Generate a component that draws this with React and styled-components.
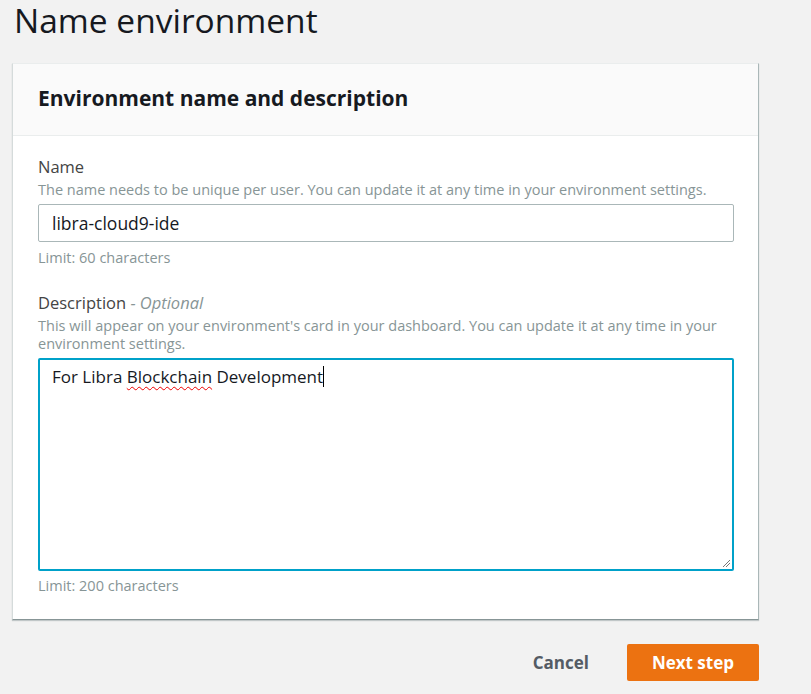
import React from "react";
import styled, { createGlobalStyle } from "styled-components";

const GlobalStyle = createGlobalStyle`
  body {
    margin: 0;
    background: #f2f2f2;
    font-family: "Open Sans", "Noto Sans", sans-serif;
    color: #16191f;
  }
`;

const Page = styled.div`
  width: 747px;
  padding: 0 0 0 12px;
`;

const Title = styled.h1`
  margin: 0 0 23px 2px;
  font-size: 33.5px;
  line-height: 40px;
  font-weight: 400;
  color: #16191f;
`;

const Card = styled.section`
  background: #fff;
  border-left: 1px solid #d5dbdb;
  border-right: 1px solid #aab7b8;
  border-bottom: 1px solid #879596;
  border-top: 1px solid #eaeded;
  box-shadow: 0 1px 1px 0 rgba(0, 28, 36, 0.2);
`;

const CardHeader = styled.header`
  background: #fafafa;
  border-bottom: 1px solid #eaeded;
  height: 72px;
  box-sizing: border-box;
  display: flex;
  align-items: center;
  padding: 0 25px 3px 25px;
`;

const CardTitle = styled.h2`
  margin: 0;
  font-size: 21px;
  font-weight: 700;
  color: #16191f;
`;

const CardBody = styled.div`
  padding: 20px 25px 24px 25px;
  display: flex;
  flex-direction: column;
  gap: 25px;
`;

const Field = styled.div`
  display: flex;
  flex-direction: column;
`;

const Label = styled.label`
  font-size: 16.5px;
  line-height: 22px;
  color: #444;
`;

const Optional = styled.i`
  color: #879596;
`;

const Help = styled.div`
  font-size: 14.5px;
  line-height: 18px;
  color: #879596;
  margin-top: ${(p) => p.$top || 0}px;
`;

const Input = styled.div`
  margin-top: 5px;
  height: 38px;
  box-sizing: border-box;
  border: 1px solid #aab7b8;
  border-radius: 2px;
  padding: 0 13px;
  display: flex;
  align-items: center;
  font-size: 17.5px;
  color: #16191f;
  width: 696px;
`;

const TextArea = styled.div`
  position: relative;
  margin-top: 5px;
  height: 213px;
  width: 696px;
  box-sizing: border-box;
  border: 2px solid #00a1c9;
  border-radius: 2px;
  padding: 6px 12px;
  font-size: 17px;
  line-height: 22px;
  color: #16191f;
`;

const Misspelled = styled.span`
  text-decoration: underline wavy #e00;
  text-decoration-thickness: 1px;
  text-underline-offset: 3px;
`;

const Caret = styled.span`
  display: inline-block;
  width: 1px;
  height: 21px;
  background: #000;
  vertical-align: -4px;
`;

const Grip = styled.svg`
  position: absolute;
  right: 1px;
  bottom: 1px;
`;

const Actions = styled.div`
  display: flex;
  justify-content: flex-end;
  align-items: center;
  gap: 38px;
  margin-top: 24px;
`;

const Button = styled.button`
  font-family: "Open Sans", "Noto Sans", sans-serif;
  font-size: 17px;
  font-weight: 700;
  border: none;
  border-radius: 2px;
  height: 37px;
  cursor: pointer;
  background: ${(p) => (p.$primary ? "#ec7211" : "transparent")};
  color: ${(p) => (p.$primary ? "#fff" : "#545b64")};
  padding: ${(p) => (p.$primary ? "0 25px" : "0")};
`;

export default function App() {
  return (
    <>
      <GlobalStyle />
      <Page>
        <Title>Name environment</Title>
        <Card>
          <CardHeader>
            <CardTitle>Environment name and description</CardTitle>
          </CardHeader>
          <CardBody>
            <Field>
              <Label>Name</Label>
              <Help $top={3}>
                The name needs to be unique per user. You can update it at any
                time in your environment settings.
              </Help>
              <Input>libra-cloud9-ide</Input>
              <Help $top={7}>Limit: 60 characters</Help>
            </Field>
            <Field>
              <Label>
                Description <Optional>- Optional</Optional>
              </Label>
              <Help $top={3}>
                This will appear on your environment's card in your dashboard.
                You can update it at any time in your environment settings.
              </Help>
              <TextArea>
                For Libra <Misspelled>Blockchain</Misspelled> Development
                <Caret />
                <Grip width="10" height="10" viewBox="0 0 10 10">
                  <path d="M9 2 L2 9 M9 5 L5 9" stroke="#777" strokeWidth="1" />
                </Grip>
              </TextArea>
              <Help $top={6}>Limit: 200 characters</Help>
            </Field>
          </CardBody>
        </Card>
        <Actions>
          <Button>Cancel</Button>
          <Button $primary>Next step</Button>
        </Actions>
      </Page>
    </>
  );
}
